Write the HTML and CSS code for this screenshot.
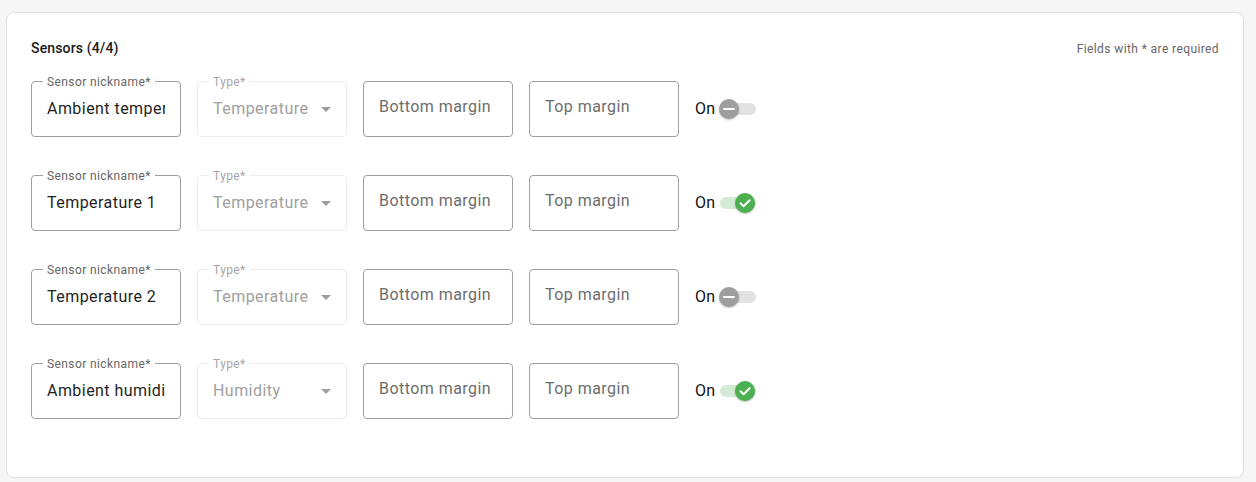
FILE: index.html
```html
<!DOCTYPE html>
<html>
<head>
<meta charset="utf-8">
<link rel="stylesheet" href="styles.css">
</head>
<body>
<div class="card">
  <div class="header">
    <div class="title">Sensors (4/4)</div>
    <div class="note">Fields with * are required</div>
  </div>
  <div class="rows">
    <div class="row">
      <div class="field"><span class="label">Sensor nickname*</span><div class="value">Ambient temperature</div></div>
      <div class="field disabled"><span class="label">Type*</span><div class="value">Temperature</div><span class="arrow"></span></div>
      <div class="field"><div class="placeholder">Bottom margin</div></div>
      <div class="field"><div class="placeholder">Top margin</div></div>
      <div class="toggle"><span class="on">On</span><span class="switch"><span class="track"></span><span class="thumb"><span class="minus"></span></span></span></div>
    </div>
    <div class="row">
      <div class="field"><span class="label">Sensor nickname*</span><div class="value">Temperature 1</div></div>
      <div class="field disabled"><span class="label">Type*</span><div class="value">Temperature</div><span class="arrow"></span></div>
      <div class="field"><div class="placeholder">Bottom margin</div></div>
      <div class="field"><div class="placeholder">Top margin</div></div>
      <div class="toggle"><span class="on">On</span><span class="switch checked"><span class="track"></span><span class="thumb"><svg width="14" height="14" viewBox="0 0 14 14"><path d="M2.5 7.2 L5.6 10.2 L11.6 4.2" fill="none" stroke="#fff" stroke-width="2" stroke-linecap="round" stroke-linejoin="round"/></svg></span></span></div>
    </div>
    <div class="row">
      <div class="field"><span class="label">Sensor nickname*</span><div class="value">Temperature 2</div></div>
      <div class="field disabled"><span class="label">Type*</span><div class="value">Temperature</div><span class="arrow"></span></div>
      <div class="field"><div class="placeholder">Bottom margin</div></div>
      <div class="field"><div class="placeholder">Top margin</div></div>
      <div class="toggle"><span class="on">On</span><span class="switch"><span class="track"></span><span class="thumb"><span class="minus"></span></span></span></div>
    </div>
    <div class="row">
      <div class="field"><span class="label">Sensor nickname*</span><div class="value">Ambient humidity</div></div>
      <div class="field disabled"><span class="label">Type*</span><div class="value">Humidity</div><span class="arrow"></span></div>
      <div class="field"><div class="placeholder">Bottom margin</div></div>
      <div class="field"><div class="placeholder">Top margin</div></div>
      <div class="toggle"><span class="on">On</span><span class="switch checked"><span class="track"></span><span class="thumb"><svg width="14" height="14" viewBox="0 0 14 14"><path d="M2.5 7.2 L5.6 10.2 L11.6 4.2" fill="none" stroke="#fff" stroke-width="2" stroke-linecap="round" stroke-linejoin="round"/></svg></span></span></div>
    </div>
  </div>
</div>
</body>
</html>
```
FILE: styles.css
```css
html, body {
  margin: 0;
  padding: 0;
  background: #f6f6f6;
  font-family: Roboto, "Liberation Sans", sans-serif;
}
body {
  padding: 12px 12px 4px 6px;
}
.card {
  background: #fff;
  border: 1px solid #e0e0e0;
  border-radius: 8px;
  padding: 24px 24px 57px 24px;
  box-sizing: border-box;
  height: 466px;
}
.header {
  display: flex;
  justify-content: space-between;
  align-items: center;
  height: 22px;
  margin-bottom: 22px;
}
.title {
  font-size: 14px;
  font-weight: 500;
  letter-spacing: 0.15px;
  color: #1a1a1a;
}
.note {
  font-size: 12px;
  letter-spacing: 0.4px;
  color: #666;
  margin-top: 2px;
}
.rows {
  display: flex;
  flex-direction: column;
  gap: 38px;
}
.row {
  display: flex;
  align-items: center;
  gap: 16px;
  height: 56px;
}
.field {
  position: relative;
  box-sizing: border-box;
  width: 150px;
  height: 56px;
  border: 1px solid #a0a0a0;
  border-radius: 4px;
  display: flex;
  align-items: center;
  padding: 0 15px;
}
.field .label {
  position: absolute;
  top: -7px;
  left: 11px;
  padding: 0 4px;
  background: #fff;
  font-size: 12px;
  line-height: 14px;
  letter-spacing: 0.4px;
  color: #666;
}
.value {
  font-size: 16px;
  letter-spacing: 0.45px;
  color: #1f1f1f;
  white-space: nowrap;
  overflow: hidden;
  width: 118px;
  margin-top: -1px;
}
.placeholder {
  font-size: 16px;
  letter-spacing: 0.45px;
  color: #6d6d6d;
  white-space: nowrap;
  margin-top: -6px;
}
.field.disabled {
  border-color: #ececec;
}
.field.disabled .label {
  color: #a6a6a6;
}
.field.disabled .value {
  color: #a0a0a0;
  width: 100px;
  overflow: visible;
  margin-top: -2px;
}
.arrow {
  position: absolute;
  right: 15px;
  top: 25px;
  width: 0;
  height: 0;
  border-left: 5px solid transparent;
  border-right: 5px solid transparent;
  border-top: 5px solid #9e9e9e;
}
.toggle {
  display: flex;
  align-items: center;
  margin-top: -1px;
}
.on {
  font-size: 16px;
  letter-spacing: 0.3px;
  color: #111;
  margin-right: 4px;
}
.switch {
  position: relative;
  width: 37px;
  height: 20px;
  display: inline-block;
}
.track {
  position: absolute;
  left: 1px;
  top: 4px;
  width: 36px;
  height: 12px;
  border-radius: 6px;
  background: #e2e2e2;
}
.switch.checked .track {
  background: #d3ebd4;
}
.thumb {
  position: absolute;
  left: 0;
  top: 0;
  width: 20px;
  height: 20px;
  border-radius: 50%;
  background: #9e9e9e;
  box-shadow: 0 1px 2px rgba(0,0,0,0.25);
  display: flex;
  align-items: center;
  justify-content: center;
}
.switch.checked .thumb {
  left: 16px;
  background: #4caf50;
}
.minus {
  width: 12px;
  height: 2px;
  background: #fff;
  border-radius: 1px;
}
```
